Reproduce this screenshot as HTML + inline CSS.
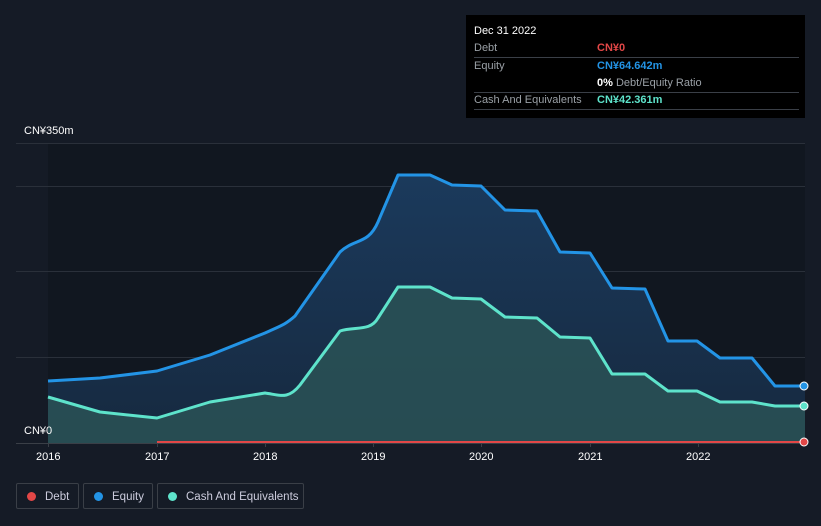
<!DOCTYPE html>
<html><head><meta charset="utf-8"><style>
body{margin:0;width:821px;height:526px;background:#151b26;font-family:"Liberation Sans",sans-serif;overflow:hidden;position:relative}
.tt{position:absolute;left:466px;top:15px;width:339px;height:103px;background:#000;color:#fff;font-size:11px}
.row{position:absolute;left:8px;right:6px;height:17px;border-bottom:1px solid #3a3f47;line-height:17px}
.row span.l{color:#9aa0a6;position:absolute;left:0}
.row span.v{position:absolute;left:123px;font-weight:bold}
.leg{position:absolute;top:483px;height:26px;border:1px solid #3a3f47;border-radius:2px;color:#ccd;font-size:11.5px;line-height:26px;box-sizing:border-box;white-space:nowrap}
.dot{display:inline-block;width:9px;height:9px;border-radius:50%;margin:0 9px 0 10px;vertical-align:-1px}
.ax{position:absolute;color:#fff;font-size:11px}
</style></head><body>
<svg width="821" height="526" style="position:absolute;left:0;top:0">
<defs><linearGradient id="g" x1="0" y1="0" x2="0" y2="1"><stop offset="0" stop-color="#1b3a5c"/><stop offset="1" stop-color="#16293f"/></linearGradient></defs>
<rect x="48" y="143" width="757" height="300" fill="#111720"/>
<g stroke="#2a303a" stroke-width="1"><line x1="16" y1="143.5" x2="805" y2="143.5"/><line x1="16" y1="186.5" x2="805" y2="186.5"/><line x1="16" y1="271.5" x2="805" y2="271.5"/><line x1="16" y1="357.5" x2="805" y2="357.5"/></g>
<path d="M48,381 L100,378 157,371 210,355 265,333 C280,326 285,325 295,316 L340,252 C355,238 368,245 378,222 L398,175 430,175 452,185 481,186 505,210 537,211 560,252 590,253 612,288 645,289 668,341 697,341 720,358 752,358 775,386 805,386 L805,443 48,443Z" fill="url(#g)"/>
<path d="M48,397 L100,412 157,418 210,402 265,393 C280,395 288,400 300,385 L340,331 C355,326 370,332 378,318 L398,287 430,287 452,298 481,299 505,317 537,318 560,337 590,338 612,374 645,374 668,391 697,391 720,402 752,402 775,406 805,406 L805,443 48,443Z" fill="#2a5256" fill-opacity="0.85"/>
<path d="M48,381 L100,378 157,371 210,355 265,333 C280,326 285,325 295,316 L340,252 C355,238 368,245 378,222 L398,175 430,175 452,185 481,186 505,210 537,211 560,252 590,253 612,288 645,289 668,341 697,341 720,358 752,358 775,386 805,386" fill="none" stroke="#2394e6" stroke-width="3" stroke-linejoin="round"/>
<path d="M48,397 L100,412 157,418 210,402 265,393 C280,395 288,400 300,385 L340,331 C355,326 370,332 378,318 L398,287 430,287 452,298 481,299 505,317 537,318 560,337 590,338 612,374 645,374 668,391 697,391 720,402 752,402 775,406 805,406" fill="none" stroke="#5ee3cb" stroke-width="3" stroke-linejoin="round"/>
<line x1="16" y1="443.5" x2="805" y2="443.5" stroke="#3a3f47"/>
<line x1="157" y1="442" x2="805" y2="442" stroke="#e24747" stroke-width="2"/>
<g stroke="#3a3f47"><line x1="48.5" y1="443" x2="48.5" y2="447"/><line x1="157.5" y1="443" x2="157.5" y2="447"/><line x1="265.5" y1="443" x2="265.5" y2="447"/><line x1="373.5" y1="443" x2="373.5" y2="447"/><line x1="481.5" y1="443" x2="481.5" y2="447"/><line x1="590.5" y1="443" x2="590.5" y2="447"/><line x1="698.5" y1="443" x2="698.5" y2="447"/></g>
<circle cx="804" cy="386" r="4" fill="#2394e6" stroke="#fff" stroke-width="1"/>
<circle cx="804" cy="406" r="4" fill="#5ee3cb" stroke="#fff" stroke-width="1"/>
<circle cx="804" cy="442" r="4" fill="#e24747" stroke="#fff" stroke-width="1"/>
</svg>
<div class="ax" style="left:24px;top:125px">CN¥350m</div>
<div class="ax" style="left:24px;top:425px">CN¥0</div>
<div class="ax" style="left:36px;top:451px">2016</div>
<div class="ax" style="left:145px;top:451px">2017</div>
<div class="ax" style="left:253px;top:451px">2018</div>
<div class="ax" style="left:361px;top:451px">2019</div>
<div class="ax" style="left:469px;top:451px">2020</div>
<div class="ax" style="left:578px;top:451px">2021</div>
<div class="ax" style="left:686px;top:451px">2022</div>
<div class="tt">
<div style="position:absolute;left:8px;top:10px">Dec 31 2022</div>
<div class="row" style="top:25px"><span class="l">Debt</span><span class="v" style="color:#e24747">CN¥0</span></div>
<div class="row" style="top:43px;border:0"><span class="l">Equity</span><span class="v" style="color:#2394e6">CN¥64.642m</span></div>
<div class="row" style="top:60px"><span class="v" style="font-weight:normal;color:#9aa0a6"><b style="color:#fff">0%</b> Debt/Equity Ratio</span></div>
<div class="row" style="top:77px"><span class="l">Cash And Equivalents</span><span class="v" style="color:#5ee3cb">CN¥42.361m</span></div>
</div>
<div class="leg" style="left:16px;width:63px"><span class="dot" style="background:#e24747"></span>Debt</div>
<div class="leg" style="left:83px;width:70px"><span class="dot" style="background:#2394e6"></span>Equity</div>
<div class="leg" style="left:157px;width:147px"><span class="dot" style="background:#5ee3cb"></span>Cash And Equivalents</div>
</body></html>
